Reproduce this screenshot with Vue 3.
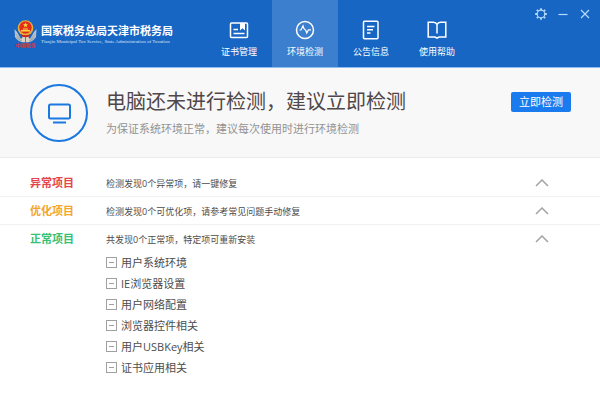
<template>
  <div class="app">
    <header class="header">
      <div class="brand">
        <svg class="emblem" viewBox="0 0 46 56" aria-hidden="true">
          <path d="M6 24 L1 18 L2 34 Q8 44 21 45 L23 38 L25 45 Q38 44 44 34 L45 18 L40 24 L33 36 L13 36 Z" fill="#bfc5ca" />
          <path d="M3 28 Q10 38 21 39 M43 28 Q36 38 25 39 M5 35 Q12 42 21 43 M41 35 Q34 42 25 43" fill="none" stroke="#737d87" stroke-width="1.2" />
          <path d="M17 32 H29 L31 44 H15 Z" fill="#d9d3c4" />
          <path d="M23 32 V45" stroke="#77746d" stroke-width="2" />
          <circle cx="23" cy="16" r="15.5" fill="#eab23a" />
          <circle cx="23" cy="15" r="12.5" fill="#e0301c" />
          <path d="M23 5 L24.4 8.4 L28 8.6 L25.2 10.9 L26.1 14.4 L23 12.4 L19.9 14.4 L20.8 10.9 L18 8.6 L21.6 8.4 Z" fill="#ffd93b" />
          <path d="M14 20 H32 V23 H14 Z M18 17 H28 V19 H18 Z" fill="#ffd93b" />
          <path d="M13 28 Q23 33 33 28 L31 33 Q23 36 15 33 Z" fill="#c9281d" />
          <text class="emblem-text" x="23" y="54" text-anchor="middle">中国税务</text>
        </svg>
        <div class="brand-text">
          <span class="brand-name">国家税务总局天津市税务局</span>
          <span class="brand-en">Tianjin Municipal Tax Service, State Administration of Taxation</span>
        </div>
      </div>

      <nav class="nav">
        <button
          v-for="tab in tabs"
          :key="tab.id"
          type="button"
          class="nav-item"
          :class="{ active: tab.id === activeTab }"
          @click="activeTab = tab.id"
        >
          <svg class="nav-icon" viewBox="0 0 20 20" aria-hidden="true">
            <template v-if="tab.id === 'cert'">
              <rect x="1.5" y="3" width="17" height="14.5" rx="1" />
              <path d="M4.5 9.5 H9 M4.5 13.5 H15.5" />
              <path class="solid" d="M11 3 H16 V10.5 L13.5 8.3 L11 10.5 Z" />
            </template>
            <template v-else-if="tab.id === 'check'">
              <circle cx="10" cy="10" r="8.5" />
              <path class="thin" d="M4.5 10 L6 10 L8 5.8 L9 8.6 L10.6 10 L11.8 13 L13.4 9.8 H16" />
            </template>
            <template v-else-if="tab.id === 'notice'">
              <rect x="2.5" y="1.2" width="14.5" height="17.6" rx="1" />
              <path d="M6 6.5 H13.5 M6 9.8 H12 M6 13 H9.5" />
            </template>
            <template v-else>
              <path d="M10 13.5 V4.5 Q9 2.2 6.5 2.2 H1.2 V17 H8 L10 18.2 L12 17 H18.8 V2.2 H13.5 Q11 2.2 10 4.5" />
            </template>
          </svg>
          <span>{{ tab.label }}</span>
        </button>
      </nav>

      <div class="window-tools">
        <button type="button" class="tool" aria-label="设置">
          <svg viewBox="0 0 12 12">
            <circle cx="6" cy="6" r="3.8" />
            <path class="teeth" d="M6 0.2 V2 M6 10 V11.8 M0.2 6 H2 M10 6 H11.8 M1.8 1.8 L3.2 3.2 M8.8 8.8 L10.2 10.2 M10.2 1.8 L8.8 3.2 M3.2 8.8 L1.8 10.2" />
          </svg>
        </button>
        <button type="button" class="tool" aria-label="最小化">
          <svg viewBox="0 0 12 12"><path d="M1.5 6.5 H10.5" /></svg>
        </button>
        <button type="button" class="tool" aria-label="关闭">
          <svg viewBox="0 0 12 12"><path d="M2 2 L10 10 M10 2 L2 10" /></svg>
        </button>
      </div>
    </header>

    <section class="summary">
      <svg class="status-icon" viewBox="0 0 58 58" aria-hidden="true">
        <circle cx="29" cy="29" r="28" />
        <rect x="19" y="20.5" width="21" height="14" rx="1.5" />
        <path d="M23 38.5 H36" />
      </svg>
      <div class="summary-text">
        <h1>电脑还未进行检测，建议立即检测</h1>
        <p>为保证系统环境正常，建议每次使用时进行环境检测</p>
      </div>
      <button type="button" class="check-btn">立即检测</button>
    </section>

    <main class="results">
      <section v-for="group in groups" :key="group.id" class="group">
        <div class="group-head">
          <h2 :class="group.id">{{ group.title }}</h2>
          <p>{{ group.desc }}</p>
          <button
            type="button"
            class="toggle"
            :class="{ closed: !group.open }"
            :aria-expanded="group.open"
            :aria-label="group.title"
            @click="group.open = !group.open"
          >
            <svg viewBox="0 0 14 8"><path d="M1 7 L7 1 L13 7" /></svg>
          </button>
        </div>
        <ul v-if="group.open && group.items.length" class="items">
          <li v-for="item in group.items" :key="item">
            <button type="button" class="item">
              <svg viewBox="0 0 11 11" aria-hidden="true">
                <rect x="0.5" y="0.5" width="10" height="10" />
                <path d="M3 5.5 H8" />
              </svg>
              <span>{{ item }}</span>
            </button>
          </li>
        </ul>
      </section>
    </main>
  </div>
</template>

<script setup>
import { ref } from 'vue'

const activeTab = ref('check')

const tabs = [
  { id: 'cert', label: '证书管理' },
  { id: 'check', label: '环境检测' },
  { id: 'notice', label: '公告信息' },
  { id: 'help', label: '使用帮助' }
]

const groups = ref([
  {
    id: 'error',
    title: '异常项目',
    desc: '检测发现0个异常项，请一键修复',
    open: true,
    items: []
  },
  {
    id: 'warning',
    title: '优化项目',
    desc: '检测发现0个可优化项，请参考常见问题手动修复',
    open: true,
    items: []
  },
  {
    id: 'normal',
    title: '正常项目',
    desc: '共发现0个正常项，特定项可重新安装',
    open: true,
    items: [
      '用户系统环境',
      'IE浏览器设置',
      '用户网络配置',
      '浏览器控件相关',
      '用户USBKey相关',
      '证书应用相关'
    ]
  }
])
</script>

<style>
body {
  background: #ffffff;
}
</style>

<style scoped>
.app {
  font-family: 'Open Sans', 'Noto Sans CJK SC', sans-serif;
  color: #4c4c4c;
}

h1,
h2,
p,
ul {
  margin: 0;
  padding: 0;
}

button {
  font-family: inherit;
  border: none;
  background: none;
  padding: 0;
  color: inherit;
  cursor: pointer;
}

svg {
  display: block;
  fill: none;
}

.header {
  display: flex;
  background: #1866c4;
  border-bottom: 1px solid #8fbdf0;
  color: #ffffff;
}

.brand {
  display: flex;
  align-items: center;
  gap: 4px;
  width: 192px;
  padding-left: 14px;
}

.emblem {
  width: 23px;
  height: 28px;
  flex: none;
}

.emblem-text {
  font-size: 10px;
  font-weight: 700;
  fill: #d8382f;
}

.brand-text {
  display: flex;
  flex-direction: column;
  white-space: nowrap;
}

.brand-name {
  font-size: 11px;
  font-weight: 700;
  line-height: 16px;
}

.brand-en {
  font-family: 'Liberation Serif', serif;
  font-size: 5px;
  line-height: 6px;
  color: #d5e5f8;
}

.nav {
  display: flex;
}

.nav-item {
  display: flex;
  flex-direction: column;
  align-items: center;
  gap: 5px;
  width: 66px;
  padding: 20px 0 8px;
  font-size: 9px;
  line-height: 14px;
}

.nav-item.active {
  background: #3c7fcf;
}

.nav-icon {
  width: 20px;
  height: 20px;
  stroke: #ffffff;
  stroke-width: 1.5;
}

.nav-icon .thin {
  stroke-width: 1.2;
}

.nav-icon .solid {
  fill: #ffffff;
  stroke: none;
}

.window-tools {
  display: flex;
  align-items: flex-start;
  gap: 10px;
  margin-left: auto;
  padding: 8px 9px 0 0;
}

.tool svg {
  width: 12px;
  height: 12px;
  stroke: #b5dafc;
  stroke-width: 1.2;
}

.tool .teeth {
  stroke-width: 1.8;
}

.summary {
  display: flex;
  align-items: flex-start;
  padding: 16px 29px 15px 30px;
  background: #f8f8f8;
  border-bottom: 1px solid #ebebeb;
}

.status-icon {
  width: 58px;
  height: 58px;
  flex: none;
  stroke: #1a78e0;
  stroke-width: 2;
}

.summary-text {
  flex: 1;
  padding: 4px 0 0 18px;
}

h1 {
  font-size: 20px;
  font-weight: 400;
  line-height: 28px;
  color: #50474a;
}

.summary-text p {
  margin-top: 4px;
  font-size: 11px;
  line-height: 18px;
  color: #929292;
}

.check-btn {
  width: 60px;
  height: 20px;
  margin-top: 8px;
  border-radius: 2px;
  background: #1a7bee;
  color: #ffffff;
  font-size: 11px;
  line-height: 20px;
}

.results {
  padding-top: 11px;
}

.group + .group {
  border-top: 1px solid #f1f1f1;
}

.group-head {
  display: flex;
  align-items: center;
  height: 27px;
  padding: 0 51px 0 30px;
}

h2 {
  width: 76px;
  font-size: 11px;
  font-weight: 700;
  line-height: 16px;
}

.error {
  color: #e5454a;
}

.warning {
  color: #f3a52c;
}

.normal {
  color: #35c176;
}

.group-head p {
  flex: 1;
  padding-top: 2px;
  font-size: 9px;
  line-height: 14px;
}

.toggle svg {
  width: 14px;
  height: 8px;
  stroke: #a3a3a3;
  stroke-width: 1.5;
}

.toggle.closed {
  transform: rotate(180deg);
}

.items {
  list-style: none;
  padding-left: 106px;
}

.item {
  display: flex;
  align-items: center;
  gap: 4px;
  height: 21px;
  font-size: 11px;
  line-height: 21px;
}

.item svg {
  width: 11px;
  height: 11px;
  stroke: #a0a0a0;
}
</style>
